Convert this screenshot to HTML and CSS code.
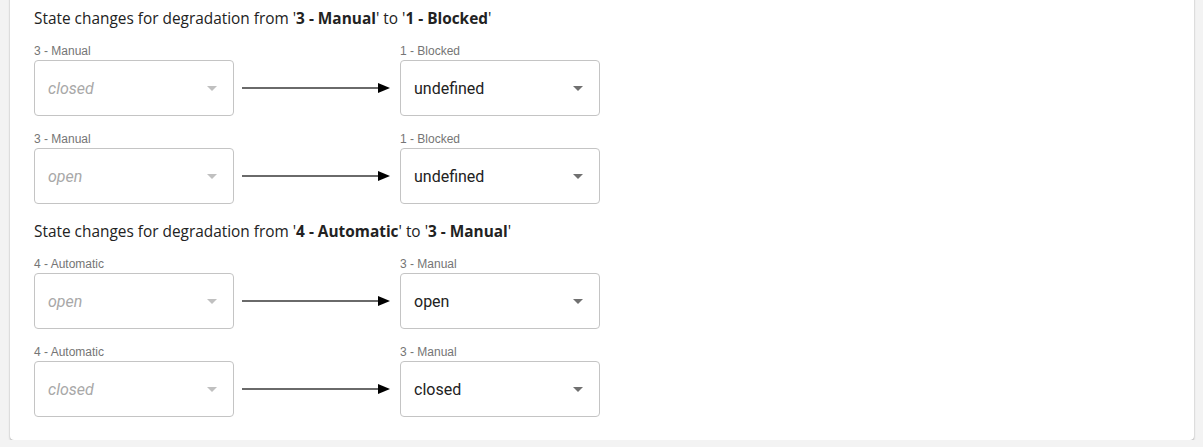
FILE: index.html
```html
<!DOCTYPE html>
<html>
<head>
<meta charset="utf-8">
<link rel="stylesheet" href="styles.css">
</head>
<body>
<div class="card">
  <div class="section">
    <div class="heading">State changes for degradation from '<b>3 - Manual</b>' to '<b>1 - Blocked</b>'</div>
    <div class="row">
      <div class="field">
        <div class="label">3 - Manual</div>
        <div class="select disabled"><span class="value">closed</span><span class="caret"></span></div>
      </div>
      <div class="arrow"><span class="line"></span><span class="head"></span></div>
      <div class="field">
        <div class="label">1 - Blocked</div>
        <div class="select"><span class="value">undefined</span><span class="caret"></span></div>
      </div>
    </div>
    <div class="row">
      <div class="field">
        <div class="label">3 - Manual</div>
        <div class="select disabled"><span class="value">open</span><span class="caret"></span></div>
      </div>
      <div class="arrow"><span class="line"></span><span class="head"></span></div>
      <div class="field">
        <div class="label">1 - Blocked</div>
        <div class="select"><span class="value">undefined</span><span class="caret"></span></div>
      </div>
    </div>
  </div>
  <div class="section">
    <div class="heading">State changes for degradation from '<b>4 - Automatic</b>' to '<b>3 - Manual</b>'</div>
    <div class="row">
      <div class="field">
        <div class="label">4 - Automatic</div>
        <div class="select disabled"><span class="value">open</span><span class="caret"></span></div>
      </div>
      <div class="arrow"><span class="line"></span><span class="head"></span></div>
      <div class="field">
        <div class="label">3 - Manual</div>
        <div class="select"><span class="value">open</span><span class="caret"></span></div>
      </div>
    </div>
    <div class="row">
      <div class="field">
        <div class="label">4 - Automatic</div>
        <div class="select disabled"><span class="value">closed</span><span class="caret"></span></div>
      </div>
      <div class="arrow"><span class="line"></span><span class="head"></span></div>
      <div class="field">
        <div class="label">3 - Manual</div>
        <div class="select"><span class="value">closed</span><span class="caret"></span></div>
      </div>
    </div>
  </div>
</div>
</body>
</html>
```
FILE: styles.css
```css
html, body {
  margin: 0;
  padding: 0;
  background: #f3f3f3;
}
body {
  font-family: "Open Sans", "Noto Sans", sans-serif;
  color: #222;
}
.card {
  background: #fff;
  margin: -10px 9px 0 10px;
  padding: 18px 24px 23px 24px;
  border-radius: 0 0 4px 4px;
  box-shadow: 0 1px 2px rgba(0,0,0,0.35);
}
.section + .section {
  margin-top: 17px;
}
.heading {
  font-size: 15.4px;
  line-height: 22px;
  color: #222;
  margin-bottom: 12px;
}
.heading b {
  font-weight: 700;
}
.row {
  display: flex;
  align-items: flex-end;
}
.row + .row {
  margin-top: 14px;
}
.field {
  width: 200px;
  display: flex;
  flex-direction: column;
}
.label {
  font-family: "Liberation Sans", Arial, sans-serif;
  font-size: 12px;
  line-height: 16px;
  color: #757575;
  padding-top: 1px;
  margin-bottom: 1px;
}
.select {
  box-sizing: border-box;
  height: 56px;
  border: 1px solid #c4c4c4;
  border-radius: 4px;
  display: flex;
  align-items: center;
  justify-content: space-between;
  padding: 0 14px 0 13px;
  font-family: Roboto, "Liberation Sans", sans-serif;
  font-size: 16px;
  color: #222;
}
.select.disabled {
  color: #a8a8a8;
  font-style: italic;
}
.caret {
  width: 0;
  height: 0;
  border-left: 5px solid transparent;
  border-right: 5px solid transparent;
  border-top: 5px solid #707070;
  margin-right: 2px;
}
.select.disabled .caret {
  border-top-color: #c0c0c0;
}
.arrow {
  width: 166px;
  height: 56px;
  display: flex;
  align-items: center;
  padding-left: 8px;
  box-sizing: border-box;
}
.line {
  width: 136px;
  height: 2px;
  background: #6a6a6a;
}
.head {
  width: 0;
  height: 0;
  border-top: 5px solid transparent;
  border-bottom: 5px solid transparent;
  border-left: 12px solid #000;
}
```
